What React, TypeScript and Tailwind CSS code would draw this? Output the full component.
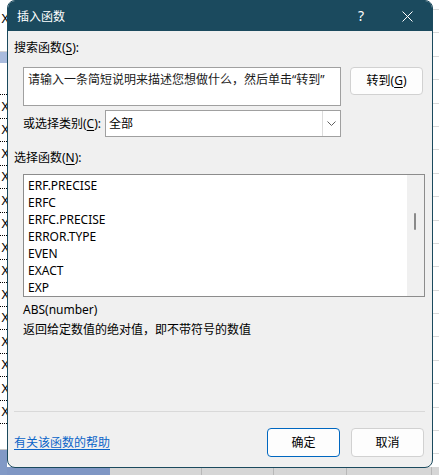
import React from 'react';

const FUNCS = ['ERF.PRECISE', 'ERFC', 'ERFC.PRECISE', 'ERROR.TYPE', 'EVEN', 'EXACT', 'EXP'];

// accelerator letter, underlined like a Win32 label
function Key({ c }: { c: string }) {
  return <span className="underline underline-offset-2">{c}</span>;
}

function SheetBackground() {
  const marked = Array.from({ length: 14 });
  const lines = Array.from({ length: 19 });
  return (
    <div className="flex h-[475px] w-[439px]">
      {/* left strip of the sheet, cut by the dialog */}
      <div className="flex w-[7px] shrink-0 flex-col overflow-hidden text-[13px] leading-none text-black">
        <div className="h-[8px]" />
        <div className="flex h-[20px] items-center justify-end">
          <span className="-mr-[2px]">X</span>
        </div>
        <div className="h-[24px] border-b border-[#d4d4d4]" />
        <div className="h-[11px] bg-[#a9bbdd]" />
        <div className="h-[32px] border-b border-dotted border-black" />
        {marked.map((_, i) => (
          <div key={i} className="flex h-[23.5px] items-center justify-end border-b border-dotted border-black">
            <span className="-mr-[2px]">X</span>
          </div>
        ))}
        <div className="h-[26px] border-b border-[#c8c8c8]" />
        <div className="flex-1 bg-[#8199c6]" />
      </div>
      {/* rest of the sheet, mostly under the dialog */}
      <div className="flex flex-1 flex-col">
        <div className="h-[10px] border-b border-[#dadada]" />
        {lines.map((_, i) => (
          <div key={i} className="h-[23.4px] border-b border-[#dadada]" />
        ))}
        <div className="flex-1" />
        <div className="flex h-[8px]">
          <div className="w-[103px] bg-[#7f96c4]" />
          <div className="w-[92px] border-r border-[#b8b8b8] bg-[#d6d6d6]" />
          <div className="w-[72px] border-r border-[#b8b8b8] bg-[#d6d6d6]" />
          <div className="w-[73px] border-r border-[#b8b8b8] bg-[#d6d6d6]" />
          <div className="w-[85px] border-r border-[#b8b8b8] bg-[#d6d6d6]" />
          <div className="flex-1 bg-[#d6d6d6]" />
        </div>
      </div>
    </div>
  );
}

export default function App() {
  return (
    <div
      className="relative h-[475px] w-[439px] overflow-hidden bg-white text-[12px] leading-[16px] text-black"
      style={{ fontFamily: '"Noto Sans", "Noto Sans CJK SC", sans-serif' }}
    >
      <SheetBackground />

      {/* Insert Function dialog */}
      <div className="absolute left-[7px] top-0 flex h-[468px] w-[426px] flex-col overflow-hidden rounded-[8px] border border-[#1b4a5e] bg-[#f0f0f0]">
        <div className="flex h-[30px] shrink-0 items-center bg-[#1b4a5e] pl-[9px] text-white">
          <div className="flex-1 pt-[1px]">插入函数</div>
          <div className="mr-[38px] text-[14px]">?</div>
          <svg width="11" height="11" viewBox="0 0 11 11" className="mr-[19px]">
            <path d="M0.5 0.5 L10.5 10.5 M10.5 0.5 L0.5 10.5" stroke="white" strokeWidth="1" />
          </svg>
        </div>

        <div className="ml-[6px] mt-[9px]">
          搜索函数(<Key c="S" />):
        </div>

        <div className="ml-[15px] mt-[11px] flex items-start gap-[9px]">
          <div className="h-[39px] w-[318px] border border-[#a0a0a0] bg-white pl-[4px] pt-[4px] text-[#1a1a1a]">
            请输入一条简短说明来描述您想做什么，然后单击“转到”
          </div>
          <button className="h-[28px] w-[73px] rounded-[4px] border border-[#d1d1d1] bg-[#fdfdfd]">
            转到(<Key c="G" />)
          </button>
        </div>

        <div className="ml-[15px] mt-[4px] flex h-[27px] items-center">
          <div className="w-[82px]">
            或选择类别(<Key c="C" />):
          </div>
          <div className="flex h-[27px] w-[236px] border border-[#a0a0a0] bg-white">
            <div className="flex flex-1 items-center pl-[3px]">全部</div>
            <div className="flex w-[18px] items-center justify-center border-l border-[#dcdcdc]">
              <svg width="9" height="5" viewBox="0 0 9 5">
                <path d="M0.5 0.5 L4.5 4.5 L8.5 0.5" fill="none" stroke="#606060" strokeWidth="1" />
              </svg>
            </div>
          </div>
        </div>

        <div className="ml-[6px] mt-[13px]">
          选择函数(<Key c="N" />):
        </div>

        <div className="ml-[15px] mt-[8px] flex h-[123px] w-[402px] border border-[#8c8c8c] bg-white">
          <div className="flex flex-1 flex-col pl-[4px] pt-[2px]">
            {FUNCS.map(f => (
              <div key={f} className="h-[17px] leading-[17px]">{f}</div>
            ))}
          </div>
          <div className="w-[17px] bg-[#f0f0f0] pl-[7px] pt-[38px]">
            <div className="h-[17px] w-[2px] rounded-full bg-[#8a8a8a]" />
          </div>
        </div>

        <div className="ml-[15px] mt-[5px]">ABS(number)</div>
        <div className="ml-[15px] mt-[4px]">返回给定数值的绝对值，即不带符号的数值</div>

        <div className="ml-[6px] mt-[73px] h-[1px] w-[411px] bg-[#d9d9d9]" />

        <div className="ml-[6px] mr-[8px] mt-[16px] flex items-center">
          <a className="flex-1 text-[#0a64c8] underline underline-offset-2">有关该函数的帮助</a>
          <button className="h-[29px] w-[73px] rounded-[4px] border border-[#0067c0] bg-[#fdfdfd]">确定</button>
          <button className="ml-[11px] h-[29px] w-[73px] rounded-[4px] border border-[#d1d1d1] bg-[#fdfdfd]">取消</button>
        </div>
      </div>
    </div>
  );
}
